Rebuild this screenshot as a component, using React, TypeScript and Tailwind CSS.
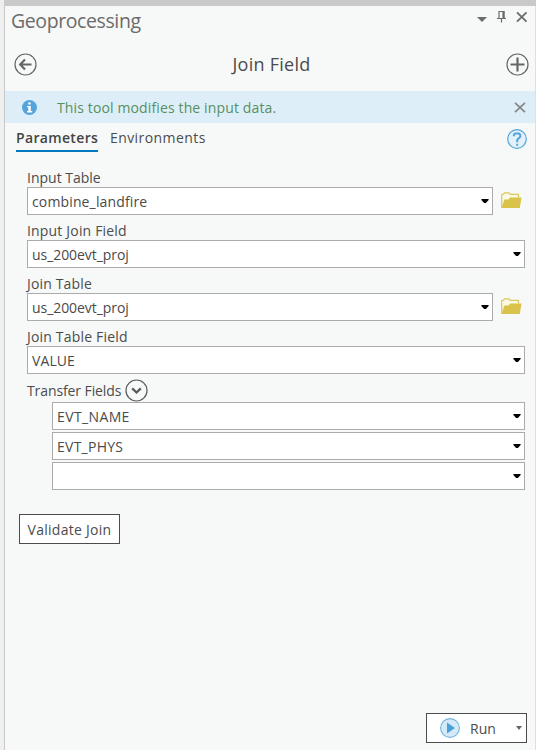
import type { ReactNode } from "react";

function Caret({ className }: { className: string }) {
  return (
    <svg className={className} width="8" height="4" viewBox="0 0 8 4" fill="currentColor">
      <path d="M.4 0h7.2v1L4.9 4H3.1L.4 1z" />
    </svg>
  );
}

function Folder() {
  return (
    <svg className="ml-2 mb-[6px] shrink-0 self-end" width="21" height="17" viewBox="0 0 21 17">
      <path d="M.7 15.5V2.7l1.6-.5L3.6.8h4.2l1.5 1.6h8.2v3.2" fill="#fbf8e4" stroke="#dcc75c" strokeWidth="1.2" />
      <path d="M.4 16 3.4 7.5h4l1.7-1.9h11.4L18.8 16z" fill="#d9c34b" />
    </svg>
  );
}

function Combo({ children, width }: { children?: ReactNode; width: string }) {
  return (
    <div className={`flex h-7 items-center justify-between border border-[#ababab] bg-white pl-1 pr-[3px] text-[#4a4a4a] ${width}`}>
      <span className="pt-px">{children}</span>
      <Caret className="mb-px text-black" />
    </div>
  );
}

function Field({ label, value, browse }: { label: ReactNode; value: ReactNode; browse?: boolean }) {
  return (
    <div className="h-[53px]">
      <div className="h-[25px] pt-[6px] leading-[19px]">{label}</div>
      <div className="flex">
        <Combo width={browse ? "w-[466px]" : "w-[498px]"}>{value}</Combo>
        {browse && <Folder />}
      </div>
    </div>
  );
}

export default function App() {
  return (
    <div className="flex h-[750px] w-[536px] overflow-hidden bg-[#efefef] pl-1 font-['Open_Sans','Noto_Sans',sans-serif] text-[14px] leading-[20px] text-[#4c4c4c]">
      <main className="flex w-[532px] flex-col border-l border-r border-l-[#c8c8c8] border-r-[#dfe1e1] bg-[#f7f9f8]">
        <div className="-mx-px h-[6px] shrink-0 bg-[#c9c9c9]" />
        <header className="flex h-[32px] shrink-0 justify-between pl-[6px] text-[#6b6b6b]">
          <h1 className="text-[19.5px] leading-[30px] tracking-[-0.4px]">Geoprocessing</h1>
          <svg className="mr-[5px] mt-[4px]" width="54" height="16" viewBox="0 0 54 16" fill="none" stroke="currentColor">
            <path d="M1 7h10l-5 5z" fill="currentColor" stroke="none" />
            <path d="M23 1.5h5v7h-5zM21 8.5h9M25.5 8.5v4" strokeWidth="1.2" />
            <path d="M27.4 1v8" strokeWidth="2" />
            <path d="m41 2.3 9.5 9.4M50.5 2.3 41 11.7" strokeWidth="1.8" />
          </svg>
        </header>
        <div className="flex h-[52px] shrink-0 items-center justify-between pl-[9px] pr-[6px] text-[#666]">
          <svg width="23" height="23" viewBox="0 0 23 23" fill="none" stroke="currentColor">
            <circle cx="11.5" cy="11.5" r="10.5" strokeWidth="1.2" />
            <path d="M17.5 11.5H7M11 6.5l-4.8 5 4.8 5" strokeWidth="2.2" />
          </svg>
          <h2 className="text-[18px] leading-6 tracking-[0.25px] text-[#4c4c4c]">Join Field</h2>
          <svg width="23" height="23" viewBox="0 0 23 23" fill="none" stroke="currentColor">
            <circle cx="11.5" cy="11.5" r="10.5" strokeWidth="1.2" />
            <path d="M4.5 11.5h14M11.5 4.5v14" strokeWidth="2.2" />
          </svg>
        </div>
        <div className="mt-px flex h-8 shrink-0 items-center bg-[#deeef9] pl-[17px] pr-[9px] text-[#569060]">
          <svg width="15" height="15" viewBox="0 0 15 15">
            <circle cx="7.5" cy="7.5" r="7.5" fill="#55a5db" />
            <path d="M6.2 2.5h2.5v2H6.2zM5 6h3.8v5h1.4v1.4H5V11h1.3V7.3H5z" fill="#fff" />
          </svg>
          <span className="ml-5 pt-px tracking-[0.13px]">This tool modifies the input data.</span>
          <svg className="ml-auto" width="12" height="11" viewBox="0 0 12 11" stroke="#858585" strokeWidth="1.7">
            <path d="m1 .8 10 9.4M11 .8 1 10.2" />
          </svg>
        </div>
        <nav className="flex h-[39px] shrink-0 items-start pl-[11px] pr-[8px]">
          <div className="h-[29px] w-[82px] border-b-2 border-[#0079c1] pt-[5px] font-semibold whitespace-nowrap text-[#444]"><span className="tracking-[0.34px]">Parameters</span></div>
          <span className="ml-3 pt-[5px] tracking-[0.42px]">Environments</span>
          <svg className="ml-auto mt-[6px]" width="20" height="20" viewBox="0 0 20 20" fill="none" stroke="#55a5db">
            <circle cx="10" cy="10" r="9.3" fill="#e2f1fb" strokeWidth="1.2" />
            <path d="M6.9 7.2V5.8L8 4.5h4l1.2 1.2v2.1l-3 3v2.5M10.2 14.8v2" strokeWidth="2" />
          </svg>
        </nav>
        <section className="pl-[22px]">
          <Field label={<span>Input Table</span>} value={<span className="tracking-[0.14px]">combine_landfire</span>} browse />
          <Field label={<span className="tracking-[0.18px]">Input Join Field</span>} value={<span className="tracking-[-0.06px]">us_200evt_proj</span>} />
          <Field label={<span className="tracking-[0.15px]">Join Table</span>} value={<span className="tracking-[-0.06px]">us_200evt_proj</span>} browse />
          <Field label={<span className="tracking-[0.18px]">Join Table Field</span>} value={<span className="tracking-[0.1px]">VALUE</span>} />
          <div className="flex h-7 items-center pt-[4px]">
            <span className="w-[98px] whitespace-nowrap pt-px tracking-[-0.1px]">Transfer Fields</span>
            <svg width="23" height="23" viewBox="0 0 23 23" fill="none" stroke="#5a5a5a">
              <circle cx="11.5" cy="11.5" r="10.5" strokeWidth="1.2" />
              <path d="m7.2 9.4 4.3 4.1 4.3-4.1" strokeWidth="2.3" />
            </svg>
          </div>
          <div className="flex flex-col gap-[2px] pl-[25px]">
            <Combo width="w-[473px]"><span className="tracking-[0.38px]">EVT_NAME</span></Combo>
            <Combo width="w-[473px]"><span className="tracking-[0.25px]">EVT_PHYS</span></Combo>
            <Combo width="w-[473px]" />
          </div>
        </section>
        <button className="ml-[14px] mt-6 h-[30px] w-[101px] shrink-0 border border-[#4c4c4c] bg-white pt-px tracking-[0.28px] whitespace-nowrap">Validate Join</button>
        <button className="mb-[7px] ml-auto mr-2 mt-auto flex h-[30px] w-[101px] shrink-0 items-center border border-[#4c4c4c] bg-white pl-[13px] pr-1">
          <svg width="20" height="20" viewBox="0 0 20 20">
            <circle cx="10" cy="10" r="9.4" fill="#d5eaf8" stroke="#75b5df" strokeWidth="1.1" />
            <path d="M7 4.5v11l8-5.5z" fill="#4d9fd7" />
          </svg>
          <span className="ml-[10px] pt-px">Run</span>
          <svg className="ml-auto" width="6" height="4" viewBox="0 0 6 4" fill="#666"><path d="M0 0h6L3 4z" /></svg>
        </button>
      </main>
    </div>
  );
}
